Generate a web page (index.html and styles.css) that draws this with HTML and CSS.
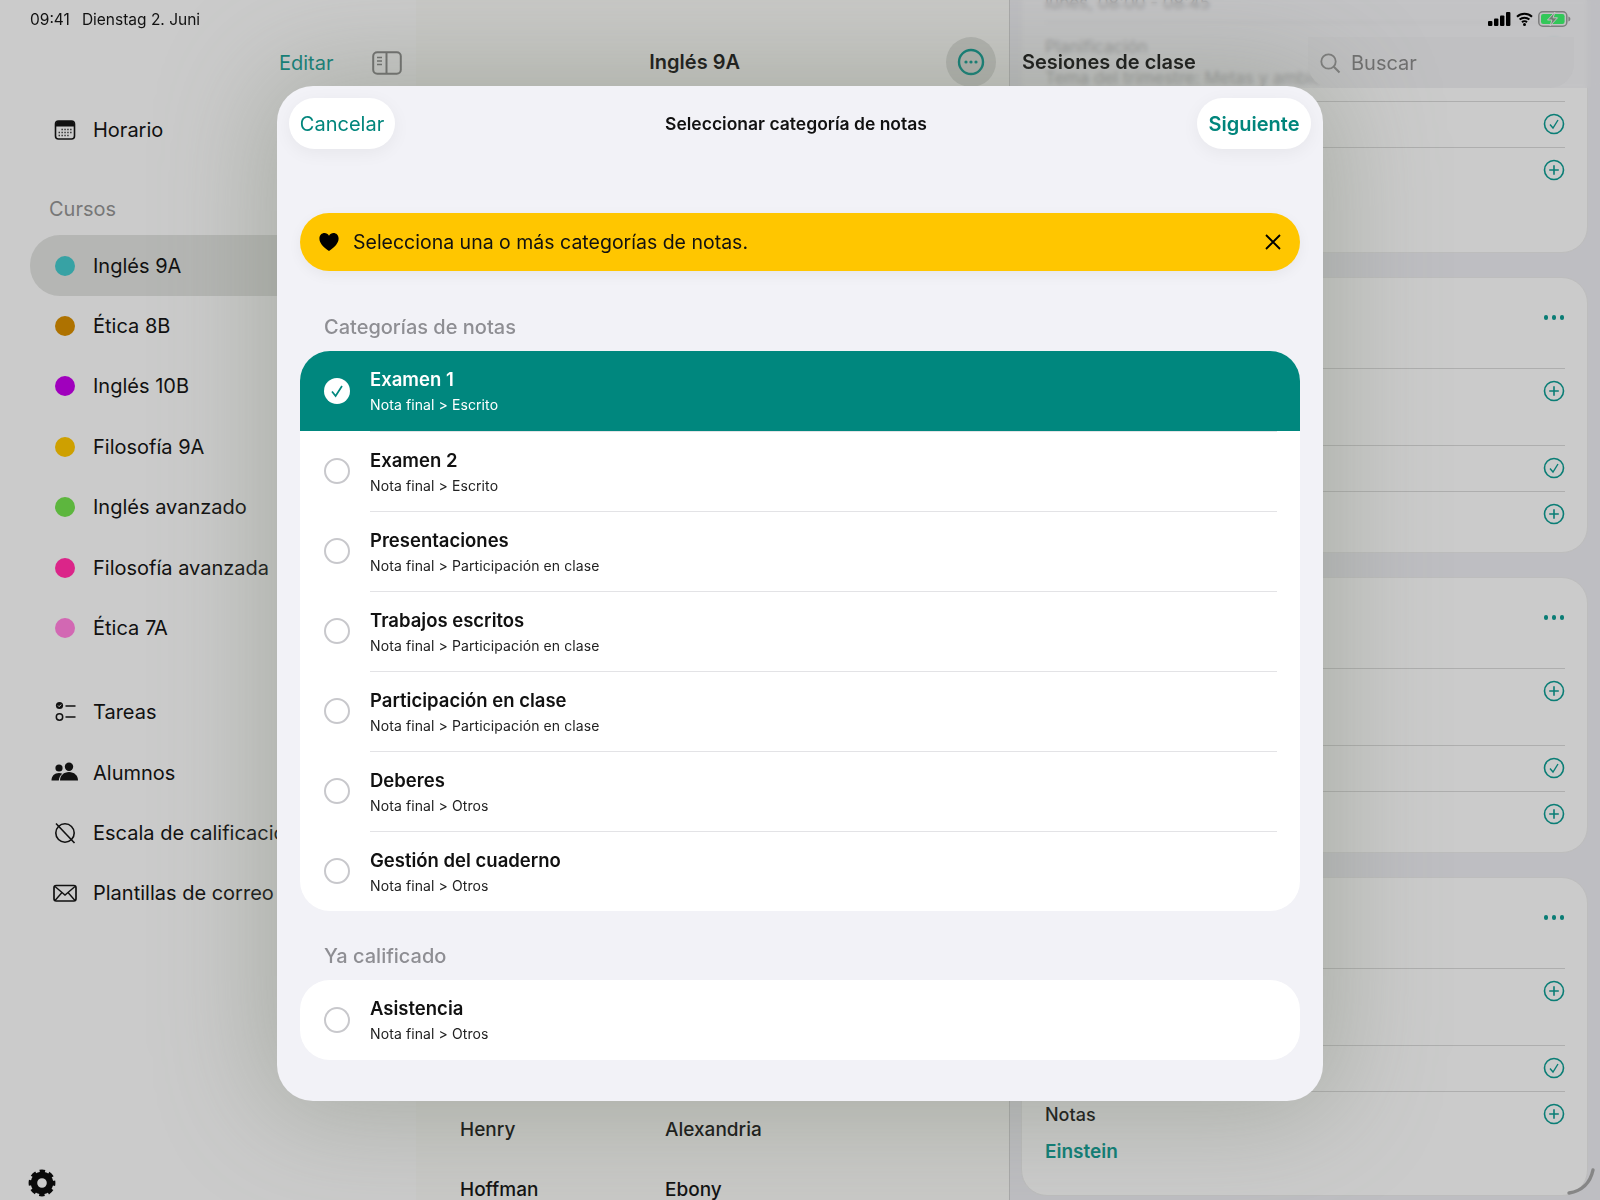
FILE: index.html
```html
<!DOCTYPE html>
<html lang="es">
<head>
<meta charset="utf-8">
<title>Seleccionar categoría de notas</title>
<link rel="stylesheet" href="styles.css">
</head>
<body>
<div class="app">
  <aside class="sidebar">
    <div class="side-head">
      <span class="edit">Editar</span>
      <svg class="toggle" width="30" height="24" viewBox="0 0 30 24"><rect x="1.2" y="1.2" width="27.6" height="21.6" rx="4" fill="none" stroke="#6e6e6e" stroke-width="2"/><path d="M14.5 1.5V22.5" stroke="#6e6e6e" stroke-width="2"/><path d="M5 6.5H10M5 10H10M5 13.5H10" stroke="#6e6e6e" stroke-width="1.6"/></svg>
    </div>
    <div class="nav-row">
      <svg class="nav-icon" width="30" height="30" viewBox="0 0 30 30"><rect x="5.5" y="6" width="19" height="18" rx="3" fill="none" stroke="#111" stroke-width="1.6"/><path d="M6 9a3 3 0 0 1 3-3h12a3 3 0 0 1 3 3v2.5H6z" fill="#111"/><path d="M11.5 14.5h1.3M14.4 14.5h1.3M17.3 14.5h1.3M20.2 14.5h1.3M8.6 17.5h1.3M11.5 17.5h1.3M14.4 17.5h1.3M17.3 17.5h1.3M20.2 17.5h1.3M8.6 20.5h1.3M11.5 20.5h1.3M14.4 20.5h1.3M17.3 20.5h1.3" stroke="#222" stroke-width="1.5"/></svg>
      <span>Horario</span>
    </div>
    <div class="side-label">Cursos</div>
    <div class="nav-row is-active"><i class="dot dot-teal"></i><span>Inglés 9A</span></div>
    <div class="nav-row"><i class="dot dot-brown"></i><span>Ética 8B</span></div>
    <div class="nav-row"><i class="dot dot-purple"></i><span>Inglés 10B</span></div>
    <div class="nav-row"><i class="dot dot-gold"></i><span>Filosofía 9A</span></div>
    <div class="nav-row"><i class="dot dot-green"></i><span>Inglés avanzado</span></div>
    <div class="nav-row"><i class="dot dot-pink"></i><span>Filosofía avanzada</span></div>
    <div class="nav-row"><i class="dot dot-rose"></i><span>Ética 7A</span></div>
    <div class="nav-group">
      <div class="nav-row">
        <svg class="nav-icon" width="30" height="30" viewBox="0 0 30 30"><circle cx="9.5" cy="8.5" r="3.6" fill="#111"/><path d="M8 8.5l1.2 1.2 2-2.2" stroke="#ccc" stroke-width="1" fill="none"/><circle cx="9.5" cy="20" r="3.2" fill="none" stroke="#111" stroke-width="1.5"/><path d="M15.5 9H25.5M15.5 20H25.5" stroke="#111" stroke-width="1.6"/></svg>
        <span>Tareas</span>
      </div>
      <div class="nav-row">
        <svg class="nav-icon" width="30" height="30" viewBox="0 0 30 30"><circle cx="9" cy="10" r="3.6" fill="#111"/><circle cx="19" cy="8.8" r="4.2" fill="#111"/><path d="M1.5 22.5c0-4.5 3-7.5 7.5-7.5 1.3 0 2.4.3 3.3.7-2.1 1.6-3.3 4-3.5 6.8z" fill="#111"/><path d="M10 22.5c0-5 3.8-8.5 9-8.5s9 3.5 9 8.5z" fill="#111"/></svg>
        <span>Alumnos</span>
      </div>
      <div class="nav-row">
        <svg class="nav-icon" width="30" height="30" viewBox="0 0 30 30"><circle cx="15" cy="15" r="9.2" fill="none" stroke="#111" stroke-width="1.6"/><path d="M6 5.5L24.5 25" stroke="#111" stroke-width="1.6"/></svg>
        <span>Escala de calificación</span>
      </div>
      <div class="nav-row">
        <svg class="nav-icon" width="30" height="30" viewBox="0 0 30 30"><rect x="4" y="7.5" width="22" height="15.5" rx="2.2" fill="none" stroke="#111" stroke-width="1.7"/><path d="M5 8.5L15 17l10-8.5M5 22.5l7-8M25 22.5l-7-8" fill="none" stroke="#111" stroke-width="1.4"/></svg>
        <span>Plantillas de correo</span>
      </div>
    </div>
    <svg class="gear" width="28" height="28" viewBox="0 0 28 28"><circle cx="14" cy="14" r="8" fill="none" stroke="#0a0a0a" stroke-width="6.4"/><circle cx="14" cy="14" r="11.4" fill="none" stroke="#0a0a0a" stroke-width="4" stroke-dasharray="5.2 3.75" stroke-dashoffset="2.6"/></svg>
  </aside>

  <main class="detail">
    <div class="detail-head">
      <span class="head-title">Inglés 9A</span>
      <span class="more-btn">
        <svg width="28" height="28" viewBox="0 0 28 28"><circle cx="14" cy="14" r="12" fill="none" stroke="#0a7d75" stroke-width="2.4"/><circle cx="9" cy="14" r="1.6" fill="#0a7d75"/><circle cx="14" cy="14" r="1.6" fill="#0a7d75"/><circle cx="19" cy="14" r="1.6" fill="#0a7d75"/></svg>
      </span>
    </div>
    <div class="names">
      <span>Henry</span><span>Alexandria</span>
      <span>Hoffman</span><span>Ebony</span>
    </div>
  </main>

  <section class="sessions">
    <div class="card card-first">
      <div class="first-a">lunes, 08:00 - 08:45</div>
      <div class="first-b">
        <div class="plan-title">Planificación</div>
        <div class="plan-text">Tema del trimestre: Metas y ambiciones</div>
        <svg class="ico ico-faint" width="22" height="22" viewBox="0 0 22 22"><circle cx="11" cy="11" r="9.5" fill="none" stroke="#0a7d75" stroke-width="1.6"/></svg>
      </div>
      <div class="row r-46"><svg class="ico" width="22" height="22" viewBox="0 0 22 22"><circle cx="11" cy="11" r="9.5" fill="none" stroke="#0a7d75" stroke-width="1.6"/><path d="M7 11.5l3 3.5 5-8" fill="none" stroke="#0a7d75" stroke-width="1.4"/></svg></div>
      <div class="row"><svg class="ico" width="22" height="22" viewBox="0 0 22 22"><circle cx="11" cy="11" r="9.5" fill="none" stroke="#0a7d75" stroke-width="1.6"/><path d="M11 6.2v9.6M6.2 11h9.6" stroke="#0a7d75" stroke-width="1.6"/></svg></div>
    </div>

    <div class="card">
      <div class="card-top"><span class="tri"><i></i><i></i><i></i></span></div>
      <div class="row r-77"><svg class="ico" width="22" height="22" viewBox="0 0 22 22"><circle cx="11" cy="11" r="9.5" fill="none" stroke="#0a7d75" stroke-width="1.6"/><path d="M11 6.2v9.6M6.2 11h9.6" stroke="#0a7d75" stroke-width="1.6"/></svg></div>
      <div class="row r-46"><svg class="ico" width="22" height="22" viewBox="0 0 22 22"><circle cx="11" cy="11" r="9.5" fill="none" stroke="#0a7d75" stroke-width="1.6"/><path d="M7 11.5l3 3.5 5-8" fill="none" stroke="#0a7d75" stroke-width="1.4"/></svg></div>
      <div class="row"><svg class="ico" width="22" height="22" viewBox="0 0 22 22"><circle cx="11" cy="11" r="9.5" fill="none" stroke="#0a7d75" stroke-width="1.6"/><path d="M11 6.2v9.6M6.2 11h9.6" stroke="#0a7d75" stroke-width="1.6"/></svg></div>
    </div>

    <div class="card">
      <div class="card-top"><span class="tri"><i></i><i></i><i></i></span></div>
      <div class="row r-77"><svg class="ico" width="22" height="22" viewBox="0 0 22 22"><circle cx="11" cy="11" r="9.5" fill="none" stroke="#0a7d75" stroke-width="1.6"/><path d="M11 6.2v9.6M6.2 11h9.6" stroke="#0a7d75" stroke-width="1.6"/></svg></div>
      <div class="row r-46"><svg class="ico" width="22" height="22" viewBox="0 0 22 22"><circle cx="11" cy="11" r="9.5" fill="none" stroke="#0a7d75" stroke-width="1.6"/><path d="M7 11.5l3 3.5 5-8" fill="none" stroke="#0a7d75" stroke-width="1.4"/></svg></div>
      <div class="row"><svg class="ico" width="22" height="22" viewBox="0 0 22 22"><circle cx="11" cy="11" r="9.5" fill="none" stroke="#0a7d75" stroke-width="1.6"/><path d="M11 6.2v9.6M6.2 11h9.6" stroke="#0a7d75" stroke-width="1.6"/></svg></div>
    </div>

    <div class="card card-last">
      <div class="card-top"><span class="tri"><i></i><i></i><i></i></span></div>
      <div class="row r-77"><svg class="ico" width="22" height="22" viewBox="0 0 22 22"><circle cx="11" cy="11" r="9.5" fill="none" stroke="#0a7d75" stroke-width="1.6"/><path d="M11 6.2v9.6M6.2 11h9.6" stroke="#0a7d75" stroke-width="1.6"/></svg></div>
      <div class="row r-46"><svg class="ico" width="22" height="22" viewBox="0 0 22 22"><circle cx="11" cy="11" r="9.5" fill="none" stroke="#0a7d75" stroke-width="1.6"/><path d="M7 11.5l3 3.5 5-8" fill="none" stroke="#0a7d75" stroke-width="1.4"/></svg></div>
      <div class="row row-notes">
        <div class="notes-label">Notas</div>
        <div class="notes-value">Einstein</div>
        <svg class="ico" width="22" height="22" viewBox="0 0 22 22"><circle cx="11" cy="11" r="9.5" fill="none" stroke="#0a7d75" stroke-width="1.6"/><path d="M11 6.2v9.6M6.2 11h9.6" stroke="#0a7d75" stroke-width="1.6"/></svg>
      </div>
    </div>

    <div class="sessions-head">
      <span class="sessions-title">Sesiones de clase</span>
      <div class="search">
        <svg width="24" height="24" viewBox="0 0 24 24"><circle cx="10.5" cy="10.5" r="7.2" fill="none" stroke="#7c7c7c" stroke-width="1.8"/><path d="M15.8 15.8L21.5 21.5" stroke="#7c7c7c" stroke-width="2"/></svg>
        <span>Buscar</span>
      </div>
    </div>
  </section>
</div>

<div class="statusbar">
  <span class="status-time">09:41</span>
  <span>Dienstag 2. Juni</span>
  <span class="status-icons">
    <svg width="23" height="14" viewBox="0 0 23 14"><rect x="0" y="9" width="4.4" height="5" rx="1" fill="#000"/><rect x="6" y="6.4" width="4.4" height="7.6" rx="1" fill="#000"/><rect x="12" y="3.4" width="4.4" height="10.6" rx="1" fill="#000"/><rect x="18" y="0" width="4.4" height="14" rx="1" fill="#000"/></svg>
    <svg width="17" height="14" viewBox="0 0 17 14"><path d="M1 4.8a11 11 0 0 1 15 0M3.6 7.6a7.3 7.3 0 0 1 9.8 0M6 10.2a3.6 3.6 0 0 1 5 0" fill="none" stroke="#000" stroke-width="2"/><circle cx="8.5" cy="12.4" r="1.5" fill="#000"/></svg>
    <svg width="33" height="16" viewBox="0 0 33 16"><rect x="0.8" y="0.8" width="28" height="14.4" rx="4" fill="none" stroke="#7d7d7d" stroke-width="1.5"/><rect x="3" y="3" width="23.6" height="10" rx="2.2" fill="#33c759"/><path d="M30.4 5.5c1.3.4 2 1.3 2 2.5s-.7 2.1-2 2.5z" fill="#7d7d7d"/><path d="M17 1L9.5 9h4.4L12 15l7.5-8.2h-4.4z" fill="#6f7f72" stroke="#c3c3c3" stroke-width="1"/></svg>
  </span>
</div>

<svg class="corner" width="30" height="30" viewBox="0 0 30 30"><path d="M3 27C15 25 24 18 27 4" fill="none" stroke="#868686" stroke-width="3.4" stroke-linecap="round"/></svg>

<div class="modal">
  <div class="modal-head">
    <span class="pill">Cancelar</span>
    <span class="modal-title">Seleccionar categoría de notas</span>
    <span class="pill pill-strong">Siguiente</span>
  </div>
  <div class="banner">
    <svg width="20" height="20" viewBox="0 0 20 20"><path d="M10 19C4 14.6.4 11 .4 6.4.4 3.2 2.8 1 5.5 1 7.4 1 9 2 10 3.8 11 2 12.600 1 14.500 1c2.700 0 5.100 2.200 5.100 5.400C19.600 11 16 14.600 10 19z" fill="#000"/></svg>
    <span class="banner-text">Selecciona una o más categorías de notas.</span>
    <svg width="18" height="18" viewBox="0 0 18 18"><path d="M2 2L16 16M16 2L2 16" stroke="#000" stroke-width="1.8"/></svg>
  </div>
  <div class="group-label">Categorías de notas</div>
  <div class="list">
    <div class="item is-selected">
      <svg class="radio" width="26" height="26" viewBox="0 0 26 26"><circle cx="13" cy="13" r="13" fill="#fff"/><path d="M8 13.500l3.600 4.500 6.400-10" fill="none" stroke="#00877e" stroke-width="1.700"/></svg>
      <div class="item-body"><div class="item-title">Examen 1</div><div class="item-sub">Nota final &gt; Escrito</div></div>
    </div>
    <div class="item">
      <i class="radio radio-empty"></i>
      <div class="item-body"><div class="item-title">Examen 2</div><div class="item-sub">Nota final &gt; Escrito</div></div>
    </div>
    <div class="item">
      <i class="radio radio-empty"></i>
      <div class="item-body"><div class="item-title">Presentaciones</div><div class="item-sub">Nota final &gt; Participación en clase</div></div>
    </div>
    <div class="item">
      <i class="radio radio-empty"></i>
      <div class="item-body"><div class="item-title">Trabajos escritos</div><div class="item-sub">Nota final &gt; Participación en clase</div></div>
    </div>
    <div class="item">
      <i class="radio radio-empty"></i>
      <div class="item-body"><div class="item-title">Participación en clase</div><div class="item-sub">Nota final &gt; Participación en clase</div></div>
    </div>
    <div class="item">
      <i class="radio radio-empty"></i>
      <div class="item-body"><div class="item-title">Deberes</div><div class="item-sub">Nota final &gt; Otros</div></div>
    </div>
    <div class="item">
      <i class="radio radio-empty"></i>
      <div class="item-body"><div class="item-title">Gestión del cuaderno</div><div class="item-sub">Nota final &gt; Otros</div></div>
    </div>
  </div>
  <div class="group-label group-label-2">Ya calificado</div>
  <div class="list">
    <div class="item">
      <i class="radio radio-empty"></i>
      <div class="item-body"><div class="item-title">Asistencia</div><div class="item-sub">Nota final &gt; Otros</div></div>
    </div>
  </div>
</div>
</body>
</html>
```

FILE: styles.css
```css
* { box-sizing: border-box; }
html, body { margin: 0; height: 100%; }
body {
  width: 1600px;
  height: 1200px;
  overflow: hidden;
  position: relative;
  font-family: Inter, "Noto Sans", "Liberation Sans", sans-serif;
  color: #111;
  background: #c9c9c9;
}
.app {
  display: grid;
  grid-template-columns: 416px 594px 590px;
  height: 1200px;
  overflow: hidden;
}

/* Sidebar */
.sidebar {
  background: #cbcbcb;
  display: flex;
  flex-direction: column;
  font-size: 20px;
  padding-left: 30px;
  padding-right: 16px;
}
.side-head {
  height: 100px;
  padding: 51px 0 0 249px;
  display: flex;
  align-items: flex-start;
  gap: 38px;
}
.edit { font-size: 20px; line-height: 24px; color: #0f7f78; }
.toggle { flex: none; margin-top: 0; }
.nav-row {
  height: 60.4px;
  display: flex;
  align-items: center;
  padding-left: 20px;
  gap: 13px;
  border-radius: 30px;
  white-space: nowrap;
  flex: none;
}
.nav-row .dot { margin: 0 5px; }
.nav-icon { flex: none; }
.is-active { background: #b5b6b4; }
.side-label {
  font-size: 20px;
  line-height: 24px;
  color: #777;
  padding: 37px 0 14px 19px;
  height: 75px;
}
.dot { flex: none; display: block; width: 20px; height: 20px; border-radius: 50%; }
.dot-teal { background: #37a2a4; }
.dot-brown { background: #ae7200; }
.dot-purple { background: #a000bd; }
.dot-gold { background: #cea000; }
.dot-green { background: #5db63e; }
.dot-pink { background: #db2589; }
.dot-rose { background: #d268b3; }
.nav-group { margin-top: 24px; }
.gear { margin: auto 0 22px -2px; flex: none; }

/* Detail */
.detail {
  background: #c9c9c7;
  border-right: 1px solid #a9a9a9;
  display: flex;
  flex-direction: column;
  padding-right: 13px;
}
.detail-head {
  height: 126px;
  padding-top: 37px;
  display: flex;
  justify-content: flex-end;
  align-items: flex-start;
  position: relative;
}
.head-title {
  margin-right: 206px;
  font-size: 20px;
  font-weight: 600;
  line-height: 50px;
}
.more-btn {
  width: 50px;
  height: 50px;
  border-radius: 50%;
  background: #b2b3b0;
  display: flex;
  align-items: center;
  justify-content: center;
}
.names {
  margin: 973px 0 0 44px;
  display: grid;
  grid-template-columns: 205px 1fr;
  grid-auto-rows: 60px;
  align-items: center;
  font-size: 19px;
  font-weight: 500;
  color: #111;
}

/* Sessions */
.sessions {
  background: #bebec2;
  padding: 0 12px 0 11px;
  position: relative;
  overflow: hidden;
  display: flex;
  flex-direction: column;
  gap: 24px;
  margin-top: 0;
}
.card {
  flex: none;
  height: 276px;
  background: #cbcbcb;
  border-radius: 26px;
  border: 1px solid #bdbdbd;
  padding: 0 22px 0 23px;
}
.card-first { margin-top: -23px; }
.card-last { height: 319px; }
.card-top {
  height: 90px;
  display: flex;
  justify-content: flex-end;
  padding-top: 37px;
}
.tri { display: flex; gap: 3.500px; height: 5px; padding-right: 1px; }
.tri i { width: 4.500px; height: 4.500px; border-radius: 50%; background: #0a7d75; }
.row {
  border-top: 1px solid #aeaeae;
  padding-top: 11px;
  display: flex;
  justify-content: flex-end;
  position: relative;
}
.ico { display: block; flex: none; margin-right: 0; }
.r-77 { height: 77px; }
.r-46 { height: 46px; }
.first-a {
  height: 45px;
  padding-top: 15px;
  font-size: 17px;
  color: #555;
  border-bottom: 1px solid #aeaeae;
}
.first-b { height: 78px; position: relative; padding-top: 13px; }
.plan-title { font-size: 17px; color: #555; line-height: 22px; }
.plan-text { font-size: 17px; color: #555; line-height: 22px; margin-top: 9px; white-space: nowrap; }
.first-b .ico-faint { position: absolute; right: 0; top: 15px; }
.row-notes { padding-top: 11px; }
.notes-label {
  position: absolute;
  left: 0;
  top: 12px;
  font-size: 18px;
  line-height: 22px;
  font-weight: 500;
}
.notes-value {
  position: absolute;
  left: 0;
  top: 48px;
  font-size: 19px;
  line-height: 24px;
  font-weight: 600;
  color: #0a7d75;
}
.sessions-head {
  position: absolute;
  left: 0;
  top: 0;
  right: 0;
  height: 88px;
  padding: 37px 26px 0 12px;
  background: rgba(190, 190, 194, .62);
  backdrop-filter: blur(2px);
  display: flex;
  align-items: flex-start;
  justify-content: space-between;
}
.sessions-title { font-size: 20px; font-weight: 600; line-height: 50px; }
.search {
  width: 266px;
  height: 51px;
  border-radius: 0 0 24px 24px;
  background: #c0c0c2;
  display: flex;
  align-items: center;
  padding-left: 10px;
  gap: 9px;
  font-size: 20px;
  color: #6f6f6f;
}

/* Overlays */
.statusbar {
  position: absolute;
  left: 30px;
  right: 30px;
  top: 8px;
  height: 22px;
  display: flex;
  align-items: center;
  font-size: 15.500px;
  color: #111;
  gap: 12px;
}
.status-icons {
  margin-left: auto;
  display: flex;
  align-items: center;
  gap: 5px;
  margin-right: -1px;
}
.corner { position: absolute; left: 1566px; top: 1166px; }

.modal {
  position: absolute;
  left: 277px;
  top: 86px;
  width: 1046px;
  height: 1015px;
  background: #f2f2f7;
  border-radius: 36px;
  box-shadow: 0 0 110px 10px rgba(120, 128, 110, .42);
  padding: 12px 23px 0;
}
.modal-head {
  display: flex;
  align-items: center;
  justify-content: space-between;
  margin: 0 -11px;
  height: 51px;
}
.modal-title { font-size: 17.500px; font-weight: 600; }
.pill {
  height: 51px;
  width: 106px;
  border-radius: 26px;
  background: #fff;
  color: #00857c;
  font-size: 20px;
  display: flex;
  align-items: center;
  justify-content: center;
  box-shadow: 0 4px 18px rgba(0, 0, 0, .05);
}
.pill-strong { width: 114px; font-weight: 600; }
.banner {
  margin-top: 64px;
  height: 58px;
  border-radius: 29px;
  background: #ffc600;
  padding: 0 18px 0 19px;
  display: flex;
  align-items: center;
  gap: 14px;
  font-size: 19.500px;
  box-shadow: 0 4px 14px rgba(0, 0, 0, .05);
}
.banner-text { flex: 1; }
.group-label {
  margin: 44px 0 12px 24px;
  font-size: 20px;
  line-height: 24px;
  font-weight: 500;
  color: #8e8e93;
}
.group-label-2 { margin-top: 33px; }
.list { background: #fff; border-radius: 30px; overflow: hidden; }
.item {
  height: 80px;
  display: flex;
  align-items: center;
  padding-left: 24px;
  gap: 20px;
  position: relative;
}
.item + .item .item-body { border-top: 1px solid #e3e3e6; }
.item-body {
  flex: none;
  width: 907px;
  height: 80px;
  padding-top: 16px;
}
.item-title { font-size: 18.500px; font-weight: 600; line-height: 24px; color: #111; }
.item-sub { font-size: 14px; line-height: 18px; margin-top: 5px; letter-spacing: .1px; color: #222; }
.radio { flex: none; display: block; width: 26px; height: 26px; }
.radio-empty { border: 2px solid #c8c8cc; border-radius: 50%; }
.is-selected { background: #00877e; }
.is-selected .item-title, .is-selected .item-sub { color: #fff; }
```
